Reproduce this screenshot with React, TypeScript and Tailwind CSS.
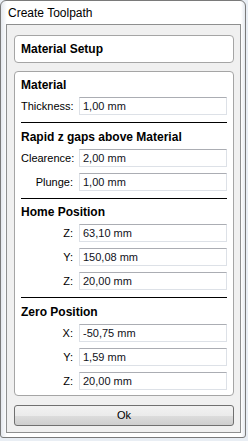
import React from 'react';

type Field = { label: string; value: string };

const Separator: React.FC = () => <div className="mt-[7px] h-px bg-black" />;

const InputRow: React.FC<{ field: Field; first?: boolean }> = ({ field, first }) => (
  <div className={`flex items-center ${first ? 'mt-[4px]' : 'mt-[6px]'}`}>
    <div className="w-[52px] text-right text-[11px] text-black leading-none">{field.label}</div>
    <div className="ml-[6px] flex-1 h-[18px] border border-[#dde1e7] border-t-[#abadb3] bg-white flex items-center pl-[3px] text-[11px] text-[#10111a] leading-none">
      {field.value}
    </div>
  </div>
);

const Section: React.FC<{ title: string; fields: Field[]; top: string }> = ({ title, fields, top }) => (
  <div className={top}>
    <div className="h-[16px] flex items-center text-[12px] font-bold text-black">{title}</div>
    {fields.map((f, i) => (
      <InputRow key={i} field={f} first={i === 0} />
    ))}
  </div>
);

export default function App() {
  const sections = [
    { title: 'Material', top: 'mt-[5px]', fields: [{ label: 'Thickness:', value: '1,00 mm' }] },
    {
      title: 'Rapid z gaps above Material',
      top: 'mt-[6px]',
      fields: [
        { label: 'Clearence:', value: '2,00 mm' },
        { label: 'Plunge:', value: '1,00 mm' },
      ],
    },
    {
      title: 'Home Position',
      top: 'mt-[5px]',
      fields: [
        { label: 'Z:', value: '63,10 mm' },
        { label: 'Y:', value: '150,08 mm' },
        { label: 'Z:', value: '20,00 mm' },
      ],
    },
    {
      title: 'Zero Position',
      top: 'mt-[6px]',
      fields: [
        { label: 'X:', value: '-50,75 mm' },
        { label: 'Y:', value: '1,59 mm' },
        { label: 'Z:', value: '20,00 mm' },
      ],
    },
  ];

  return (
    <div className="w-[248px] h-[441px] bg-[#e9eef4] font-['Liberation_Sans',Arial,sans-serif]">
      <div className="w-[246px] h-[438px] rounded-t-[6px] rounded-b-[3px] border border-[#7a7a7a] bg-[linear-gradient(to_right,#e4e8ee,#ffffff_6px,#ffffff_240px,#e4e8ee)] flex flex-col pl-[5px] pr-[4px] pb-[4px]">
        {/* Title bar */}
        <div className="h-[23px] flex items-center pl-[2px] text-[12px] text-black">Create Toolpath</div>

        <div className="flex-1 border border-[#8e8f8f] bg-[#f0f0f0] pl-[7px] pr-[6px] pt-[10px] flex flex-col">
          {/* Material Setup */}
          <div className="h-[28px] rounded-[4px] border border-[#a5a5a5] bg-white flex items-center pl-[6px] text-[12px] font-bold text-black">
            Material Setup
          </div>

          {/* Parameters */}
          <div className="mt-[8px] h-[325px] rounded-[4px] border border-[#a5a5a5] bg-white px-[6px]">
            {sections.map((s, i) => (
              <React.Fragment key={i}>
                {i > 0 && <Separator />}
                <Section title={s.title} fields={s.fields} top={s.top} />
              </React.Fragment>
            ))}
          </div>

          {/* Ok button */}
          <button className="mt-[9px] h-[21px] w-full rounded-[3px] border border-[#707070] bg-[linear-gradient(to_bottom,#f2f2f2_0%,#ebebeb_50%,#dddddd_50%,#cfcfcf_100%)] text-[11px] text-black leading-none">
            Ok
          </button>
        </div>
      </div>
    </div>
  );
}
